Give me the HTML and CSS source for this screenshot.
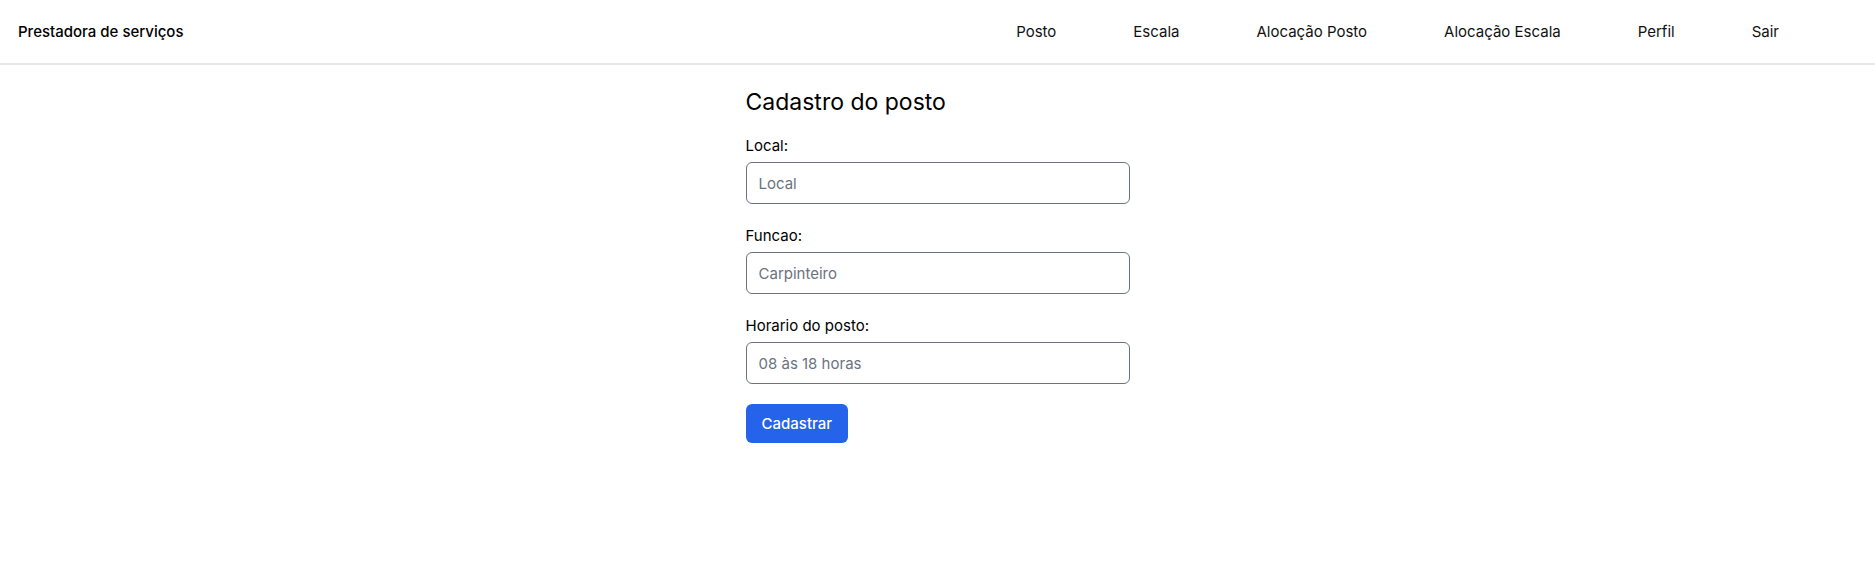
FILE: index.html
```html
<!DOCTYPE html>
<html lang="pt-BR">
<head>
<meta charset="utf-8">
<title>Cadastro do posto</title>
<link rel="stylesheet" href="styles.css">
</head>
<body>
<header class="topbar">
  <div class="brand">Prestadora de serviços</div>
  <nav class="nav">
    <a href="#">Posto</a>
    <a href="#">Escala</a>
    <a href="#">Alocação Posto</a>
    <a href="#">Alocação Escala</a>
    <a href="#">Perfil</a>
    <a href="#">Sair</a>
  </nav>
</header>
<main class="main">
  <form class="form">
    <h2 class="title">Cadastro do posto</h2>
    <div class="field">
      <label class="label" for="local">Local:</label>
      <input class="input" id="local" type="text" placeholder="Local">
    </div>
    <div class="field">
      <label class="label" for="funcao">Funcao:</label>
      <input class="input" id="funcao" type="text" placeholder="Carpinteiro">
    </div>
    <div class="field">
      <label class="label" for="horario">Horario do posto:</label>
      <input class="input" id="horario" type="text" placeholder="08 às 18 horas">
    </div>
    <button class="btn" type="button">Cadastrar</button>
  </form>
</main>
</body>
</html>
```
FILE: styles.css
```css
* { box-sizing: border-box; }
html, body { margin: 0; padding: 0; background: #fff; }
body {
  font-family: Inter, "Noto Sans", sans-serif;
  color: #111827;
}
.topbar {
  height: 65px;
  border-bottom: 2px solid #e5e7eb;
  display: flex;
  align-items: center;
  justify-content: space-between;
  padding: 0 96px 0 18px;
}
.brand {
  font-size: 15px;
  font-weight: 500;
  color: #000;
}
.nav {
  display: flex;
  gap: 77px;
}
.nav a {
  font-size: 15px;
  color: #111;
  text-decoration: none;
}
.main {
  padding-top: 21px;
}
.form {
  width: 384px;
  margin: 0 auto;
}
.title {
  margin: 0 0 16px;
  font-size: 23px;
  line-height: 32px;
  font-weight: 400;
  color: #000;
}
.field {
  margin-bottom: 20px;
}
.label {
  display: block;
  font-size: 15px;
  line-height: 24px;
  margin-bottom: 4px;
  color: #000;
}
.input {
  display: block;
  width: 100%;
  height: 42px;
  padding: 0 12px;
  border: 1px solid #6b7280;
  border-radius: 6px;
  font-family: inherit;
  font-size: 15px;
  color: #111827;
  background: #fff;
}
.input::placeholder { color: #6b7280; }
.btn {
  display: block;
  height: 39px;
  padding: 0 16px;
  border: 0;
  border-radius: 6px;
  background: #2563eb;
  color: #fff;
  font-family: inherit;
  font-size: 15px;
  font-weight: 500;
}
```
